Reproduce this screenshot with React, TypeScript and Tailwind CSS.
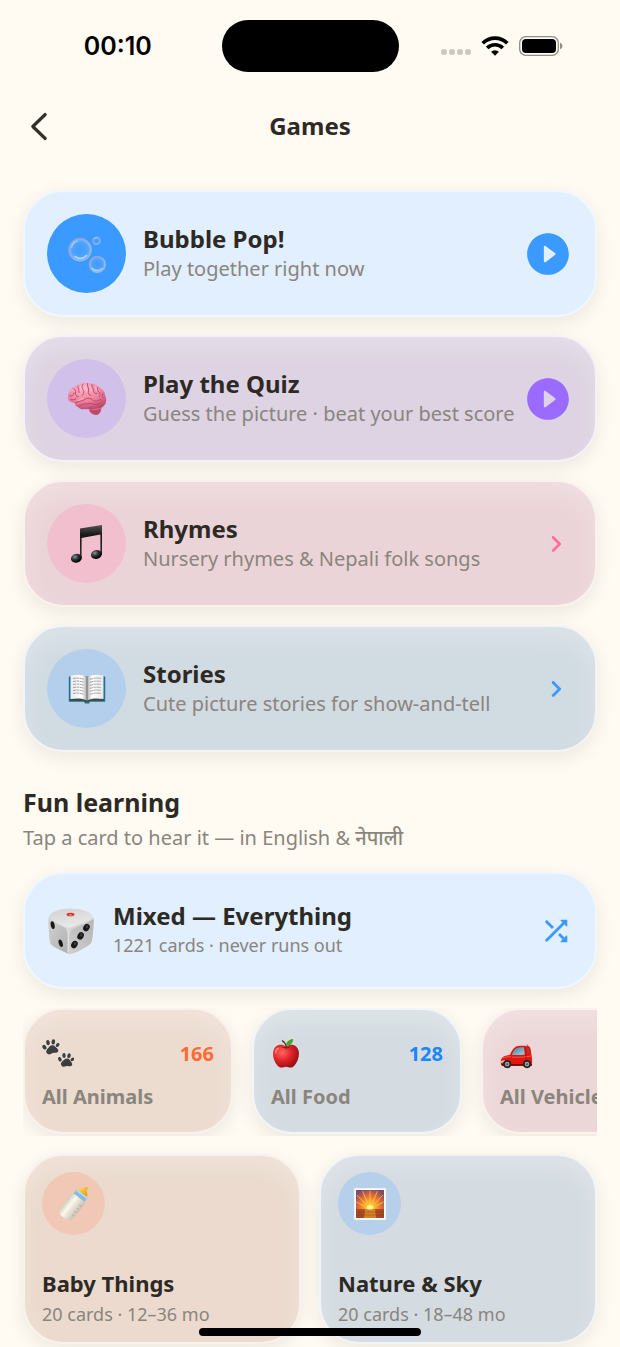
import type { ReactNode } from "react";

const ICONS = {
  play: "M12 2C6.48 2 2 6.48 2 12s4.48 10 10 10 10-4.48 10-10S17.52 2 12 2zm-2 13.5v-7c0-.41.47-.65.8-.4l4.67 3.5c.27.2.27.6 0 .8l-4.67 3.5c-.33.25-.8.01-.8-.4z",
  chevron:
    "M9.29 6.71c-.39.39-.39 1.02 0 1.41L13.17 12l-3.88 3.88c-.39.39-.39 1.02 0 1.41.39.39 1.02.39 1.41 0l4.59-4.59c.39-.39.39-1.02 0-1.41L10.7 6.7c-.38-.38-1.02-.38-1.41.01z",
  shuffle:
    "M10.59 9.17L6.12 4.7c-.39-.39-1.02-.39-1.41 0-.39.39-.39 1.02 0 1.41l4.46 4.46 1.42-1.4zm4.76-4.32l1.19 1.19L4.7 17.88c-.39.39-.39 1.02 0 1.41.39.39 1.02.39 1.41 0L17.96 7.46l1.19 1.19c.31.31.85.09.85-.36V4.5c0-.28-.22-.5-.5-.5h-3.79c-.45 0-.67.54-.36.85zm-.52 8.56l-1.41 1.41 3.13 3.13-1.2 1.2c-.31.31-.09.85.36.85h3.79c.28 0 .5-.22.5-.5v-3.79c0-.45-.54-.67-.85-.35l-1.19 1.19-3.13-3.14z",
};

function Glyph({ name, className }: { name: keyof typeof ICONS; className: string }) {
  return (
    <svg viewBox="0 0 24 24" fill="currentColor" aria-hidden="true" className={`shrink-0 ${className}`}>
      <path d={ICONS[name]} />
    </svg>
  );
}

function Bubbles() {
  return (
    <svg viewBox="0 0 40 40" className="size-10" aria-hidden="true">
      <defs>
        <radialGradient id="bub">
          <stop offset="0" stopColor="#5aa9fb" stopOpacity="0.15" />
          <stop offset="0.7" stopColor="#86bdf6" stopOpacity="0.3" />
          <stop offset="1" stopColor="#b9cdf2" stopOpacity="0.7" />
        </radialGradient>
        <linearGradient id="bubEdge" x1="0" y1="0" x2="1" y2="1">
          <stop offset="0" stopColor="#8fa3c4" />
          <stop offset="0.4" stopColor="#a79be0" />
          <stop offset="0.7" stopColor="#8fc3ee" />
          <stop offset="1" stopColor="#a9a3c4" />
        </linearGradient>
      </defs>
      <g fill="url(#bub)" stroke="url(#bubEdge)">
        <circle cx="13" cy="15.8" r="11.2" strokeWidth="1.1" />
        <circle cx="29.4" cy="6.7" r="3.8" strokeWidth="0.9" />
        <circle cx="30.3" cy="30.3" r="8" strokeWidth="1.3" />
      </g>
      <g fill="none" stroke="#fff" strokeLinecap="round">
        <path d="M4.6 13c1-3 3-5 5.6-5.8" strokeWidth="1.4" opacity="0.4" />
        <path d="M8 22.6c3.5 2.4 8 2.2 11.5-1" strokeWidth="1.8" opacity="0.5" />
        <path d="M25 34.2c2.6 3 7.6 3 10.2.2" strokeWidth="1.3" opacity="0.5" />
        <path d="M27.4 4.8c.8-.9 2-1.2 3-.9" strokeWidth="0.8" opacity="0.6" />
      </g>
    </svg>
  );
}

function Brain() {
  return (
    <svg viewBox="0 0 40 34" className="h-[34px] w-10" aria-hidden="true">
      <defs>
        <radialGradient id="brain" cx="0.4" cy="0.2" r="0.85">
          <stop offset="0" stopColor="#ffb3c6" />
          <stop offset="0.6" stopColor="#ee7f9c" />
          <stop offset="1" stopColor="#b8456a" />
        </radialGradient>
      </defs>
      <path d="M24 24c0 5 1 8 4 9 3 .6 5-1.5 6-4.5l-2-5z" fill="#b44763" />
      <path d="M21.5 25.5c0 4 3 7 6.5 7s6.5-3 6.5-7-3-5-6.5-5-6.5 1-6.5 5z" fill="#d05f80" />
      <path
        d="M1 16C.6 10.5 4 6 9 4c3-2.500 8-3.400 12-2.600 4-.6 9 1 11.500 4.200 3.500 1.700 5.500 4.900 5.900 8.400 1.400 3 1.100 7.500-1.400 9.500-1.500 2.300-5 3.200-8 2.300-3 1.900-6.500 1.800-9 .8-3 1.300-7 1-9-1.600-2.500-.2-3-2.300-2.800-4C4 20.800 1.300 19 1 16z"
        fill="url(#brain)"
      />
      <g fill="none" stroke="#b8446a" strokeWidth="0.9" strokeLinecap="round">
        <path d="M8.200 21c3-2.500 7-1.500 9.500-3.500s6-1.500 8 .5 5 1 8-.5" />
        <path d="M3 14c2 .5 3.500-.5 4-3M6 6.500c2.500.5 3 2.500 2.500 4.500s1 4 3 3.500M11 4c-.5 2.500 1.500 4 1 6.500M16 2c-2 2.500-.5 5 .5 6.500s0 4-1.500 5M20.500 1.500c-1 3 2 4.500 1 7.500s1 4 2.500 4.500M25 2.500c-1 2.500 1.500 3.500 1.500 6s2 3.500 3.500 3M31 5.500c-1.500 1.500-.5 3.500 1 4.500s1.500 3 .5 4.500M36.500 11c-1.500 1-1.500 3-.5 4.500M12 24c2-.5 4-2.500 6.500-2s4-1.500 6-.5 4 2 6 .5M4 17.500c1.500.5 3.500.5 5-.8M35 19c-1 2-3 3-5 3.500M19 27c1.500-1 4-.5 5.500-2" />
        <path d="M23.500 29c3 .8 7 .5 9.500-.8M25 31c2.500.4 5 .2 7-.6" stroke="#9e3552" />
      </g>
      <g fill="none" stroke="#ffd3dd" strokeWidth="0.9" strokeLinecap="round" opacity="0.8">
        <path d="M4.500 9c.8-1.500 1.500-1.800 2.300-2M13.500 4.500c0 1.500.7 2.500.8 4M18.500 4c-.3 2 1.300 3 1 5M23 4.500c.5 1.500 1.300 2.300 1.200 4M28.500 5c.2 1.500.9 2 1 3.500M11 18.500c2-.8 3.500-.8 5-1.800" />
      </g>
    </svg>
  );
}

function MusicNotes() {
  return (
    <svg viewBox="0 0 34 40" className="h-10 w-[34px]" aria-hidden="true">
      <defs>
        <linearGradient id="beam" x1="0" y1="0" x2="0" y2="1">
          <stop offset="0" stopColor="#555" />
          <stop offset="0.3" stopColor="#181818" />
          <stop offset="1" stopColor="#303030" />
        </linearGradient>
        <radialGradient id="note" cx="0.4" cy="0.3" r="0.6">
          <stop offset="0" stopColor="#8d989b" />
          <stop offset="0.5" stopColor="#30363a" />
          <stop offset="1" stopColor="#08090b" />
        </radialGradient>
      </defs>
      <path d="M10 4.500L32 1v30h-1.600V10.500L11.600 14v20H10z" fill="url(#beam)" />
      <ellipse cx="6.400" cy="34.300" rx="5.500" ry="4.400" transform="rotate(-15 6.400 34.300)" fill="url(#note)" />
      <ellipse cx="26.400" cy="30.500" rx="5.500" ry="4.400" transform="rotate(-15 26.400 30.500)" fill="url(#note)" />
    </svg>
  );
}

function Book() {
  return (
    <svg viewBox="0 0 38 30" className="h-[30px] w-[38px]" aria-hidden="true">
      <defs>
        <linearGradient id="pageL" x1="0" x2="1">
          <stop offset="0" stopColor="#e9e9e9" />
          <stop offset="0.7" stopColor="#fff" />
          <stop offset="1" stopColor="#a9a9a9" />
        </linearGradient>
        <linearGradient id="pageR" x1="0" x2="1">
          <stop offset="0" stopColor="#aaa" />
          <stop offset="0.3" stopColor="#fff" />
          <stop offset="1" stopColor="#e6e6e6" />
        </linearGradient>
      </defs>
      <path d="M.8 2.500h36.400v25.300H22l-1 1.600h-4l-1-1.600H.8z" fill="#1e7193" />
      <path d="M2 24.500h34v2.300H22l-1.300 1h-3.400l-1.300-1H2z" fill="#4a443c" />
      <path d="M2.500 1.500C8 .2 15 .4 19 3v23.500C15 24 8 24 2.500 25z" fill="url(#pageL)" />
      <path d="M35.500 1.500C30 .2 23 .4 19 3v23.500c4-2.500 11-2.500 16.500-1.500z" fill="url(#pageR)" />
      <path
        d="M5 4.500c4-.8 8-.5 11 .9M5 7.500c4-.8 8-.5 11 .9M5 10.500c4-.8 8-.5 11 .9M5 13.500c4-.8 8-.5 11 .9M5 16.500c4-.8 8-.5 11 .9M5 19.500c4-.8 8-.5 11 .9M22 5.400c3-1.400 7-1.700 11-.9M22 8.400c3-1.400 7-1.700 11-.9M22 11.400c3-1.400 7-1.700 11-.9M22 14.400c3-1.400 7-1.700 11-.9M22 17.400c3-1.400 7-1.700 11-.9M22 20.400c3-1.400 7-1.700 11-.9"
        fill="none"
        stroke="#9b9b9b"
        strokeWidth="0.9"
        strokeDasharray="3.500 0.500 2 0.500"
      />
      <path d="M19 3v23.500" stroke="#6c6c6c" strokeWidth="0.9" />
    </svg>
  );
}

function Dice() {
  return (
    <svg viewBox="0 0 49 49" className="size-12 shrink-0" aria-hidden="true">
      <defs>
        <linearGradient id="dTop" x1="0" y1="0" x2="0.3" y2="1">
          <stop offset="0" stopColor="#d2d2d2" />
          <stop offset="1" stopColor="#e9e9e9" />
        </linearGradient>
        <linearGradient id="dLeft" x1="0" y1="0" x2="1" y2="1">
          <stop offset="0" stopColor="#d2d2d2" />
          <stop offset="1" stopColor="#b0b0b0" />
        </linearGradient>
        <linearGradient id="dRight" x1="1" y1="0" x2="0" y2="1">
          <stop offset="0" stopColor="#b4b4b4" />
          <stop offset="1" stopColor="#cfcfcf" />
        </linearGradient>
      </defs>
      <path d="M1.500 12C2 8 5 5.500 9 4.300 18 1 30 1 39 4.300c5 1.500 8.300 4.200 8.700 8-.2 9-.8 17-2.200 23.500-.8 3-14 10-19 11.700-2 .6-4 .5-6-.4C14 44.500 6 40.500 3.800 37.800 2.500 35 1.300 18 1.500 12z" fill="#d6d6d6" />
      <path d="M1.600 12c2 2.500 14 7.500 17 9.500 2 1.500 2.500 4 2.500 7l-.2 18.700C14 44.500 6 40.500 3.800 37.800 2.500 35 1.300 18 1.600 12z" fill="url(#dLeft)" />
      <path d="M47.600 12c-3 3.500-18 8.500-21.500 10.500-2 1.500-3 3.500-3.200 6.500l-1.500 18.500c2 .5 4 .3 5.600-.2C32 45.500 44.700 38.800 45.500 35.800c1.400-6.500 2-14.800 2.100-23.800z" fill="url(#dRight)" />
      <path d="M2.500 9.500C4 6.500 6.500 5 9 4.300 18 1 30 1 39 4.300c4 1.200 6.700 3 8 5.700-2 4-18 8.500-21.500 10.500-2 1-4.500 1-6.500 0C15 18.500 4 14.500 2.500 9.500z" fill="url(#dTop)" />
      <path d="M20.500 22c1.500 2 1.500 6 1.400 10l-.3 14" fill="none" stroke="#eaeaea" strokeWidth="1.2" opacity="0.7" />
      <ellipse cx="24" cy="7.600" rx="4" ry="1.800" fill="#d8281e" />
      <ellipse cx="24" cy="8.200" rx="2.300" ry="0.7" fill="#f58d80" />
      <g fill="#191919">
        <ellipse cx="5.800" cy="18.500" rx="2" ry="4" transform="rotate(-12 5.800 18.500)" />
        <ellipse cx="14" cy="37" rx="2" ry="4" transform="rotate(-16 14 37)" />
        <ellipse cx="40.300" cy="21" rx="3.100" ry="4" transform="rotate(30 40.300 21)" />
        <ellipse cx="34.300" cy="29.500" rx="3.100" ry="4" transform="rotate(30 34.300 29.500)" />
        <ellipse cx="28" cy="38.300" rx="3.100" ry="4" transform="rotate(30 28 38.300)" />
      </g>
      <g fill="#3d3d3d">
        <ellipse cx="41" cy="20" rx="1.200" ry="1.600" />
        <ellipse cx="35" cy="28.500" rx="1.200" ry="1.600" />
        <ellipse cx="28.700" cy="37.300" rx="1.200" ry="1.600" />
      </g>
    </svg>
  );
}

function Paws() {
  const paw = (
    <>
      <path d="M5 10.500c1.500-1.500 2.500-4 5-4.300 2.600-.2 3.500 2 5.200 3.300 1.600 1.300 1.500 3.600-.4 4.100-1.600.4-2.700-.1-4.200.5-1.400.6-2.400 1.600-4.100 1.200-2-.5-3-3-1.500-4.800z" />
      <ellipse cx="2.400" cy="8.200" rx="1.800" ry="2.500" transform="rotate(-35 2.400 8.200)" />
      <ellipse cx="6" cy="3.600" rx="1.800" ry="2.700" transform="rotate(-12 6 3.600)" />
      <ellipse cx="11.300" cy="2.900" rx="1.800" ry="2.600" transform="rotate(8 11.300 2.900)" />
      <ellipse cx="15.600" cy="6" rx="1.600" ry="2.200" transform="rotate(40 15.600 6)" />
    </>
  );
  return (
    <svg viewBox="0 0 32 30" className="h-[30px] w-8" fill="#3c3d3f" aria-hidden="true">
      {paw}
      <g transform="translate(15.500 13.500) rotate(10 8 8) scale(0.940)">{paw}</g>
    </svg>
  );
}

function Apple() {
  return (
    <svg viewBox="0 0 30 30" className="size-[30px]" aria-hidden="true">
      <defs>
        <radialGradient id="apple" cx="0.35" cy="0.35" r="0.75">
          <stop offset="0" stopColor="#ff6a5c" />
          <stop offset="0.45" stopColor="#e3262a" />
          <stop offset="1" stopColor="#8f0a12" />
        </radialGradient>
      </defs>
      <path d="M15 7.500c3-2.200 7.500-2.400 10.300.2 3.200 3 3.200 8.300 1.500 13-1.600 4.300-4.300 7.800-7.300 7.800-1.800 0-2.700-.8-4.500-.8s-2.700.8-4.500.8c-3 0-5.900-3.500-7.400-7.800C1.600 16 1.500 10.700 4.700 7.700 7.500 5.100 12 5.300 15 7.500z" fill="url(#apple)" />
      <path d="M10.500 7.600c2.500 1.300 6.500 1.300 9 0-2 2.600-7 2.600-9 0z" fill="#7c0a10" />
      <path d="M15.400 8.500C15 5.500 13.600 3.200 11.400 1.800" fill="none" stroke="#4d2a17" strokeWidth="1.3" strokeLinecap="round" />
      <path d="M15 6.500c.3-3.700 3-6 7-6.400.4 3.900-2.500 7-7 6.400z" fill="#43a52c" />
      <path d="M4.500 14c0-2.500 1-4 3-4.800" fill="none" stroke="#ffb3a8" strokeWidth="1.5" strokeLinecap="round" opacity="0.6" />
    </svg>
  );
}

function Car() {
  return (
    <svg viewBox="0 0 34 30" className="h-[30px] w-[34px]" aria-hidden="true">
      <defs>
        <linearGradient id="glass" x1="0" y1="0" x2="1" y2="1">
          <stop offset="0" stopColor="#3d7f97" />
          <stop offset="1" stopColor="#9fd6e6" />
        </linearGradient>
      </defs>
      <g transform="translate(0 4.500)">
        <path d="M27 1l1.500 2.500" stroke="#333" strokeWidth="0.7" />
        <path d="M10 11.500C12 6.500 14.500 3.200 18 2.600c3.500-.6 8.500-.5 11 .5 1.500.6 2 3.500 2.300 7.500.8 3 1 7.500.6 10.400-.2 1-1 1.500-2 1.500H3.500C1.500 22.500.8 21 .8 18.500.8 14 3.500 12 10 11.500z" fill="#e2150f" />
        <path d="M11.800 11.200c1.400-4 3.600-6.800 6.800-7.200 1.800-.2 4-.2 5.400-.1l.8 7c-4 .7-9 1-13 .3z" fill="url(#glass)" />
        <path d="M26.200 4.200c1.200 0 2.200.1 2.600.4.500.9 1 3.300 1.100 5.400l-3 .3z" fill="#b4372a" />
        <path d="M2 14.500c3-1 6-1.200 9-1.200M12 13.500c4 .5 13 .3 19-1" fill="none" stroke="#ff7264" strokeWidth="0.7" />
        <path d="M25.300 4l1.400 17" stroke="#9c0c08" strokeWidth="0.6" />
        <path d="M1 17.500l4-1v2.300l-4 .5z" fill="#f1c9a8" />
        <path d="M1 20.500h31v1.800H2z" fill="#6a0f0b" />
        <circle cx="7.200" cy="20.600" r="4.100" fill="#262626" />
        <circle cx="7.200" cy="20.600" r="2.300" fill="#9fa2a6" />
        <circle cx="7.200" cy="20.600" r="0.9" fill="#3b3b3b" />
        <circle cx="27" cy="20.600" r="4.100" fill="#262626" />
        <circle cx="27" cy="20.600" r="2.300" fill="#9fa2a6" />
        <circle cx="27" cy="20.600" r="0.9" fill="#3b3b3b" />
      </g>
    </svg>
  );
}

function Bottle() {
  return (
    <svg viewBox="0 0 34 34" className="size-[34px]" aria-hidden="true">
      <defs>
        <linearGradient id="milk" x1="0" x2="1">
          <stop offset="0" stopColor="#cfc9bb" />
          <stop offset="0.35" stopColor="#fbf8ec" />
          <stop offset="1" stopColor="#c4bfae" />
        </linearGradient>
        <linearGradient id="teat" x1="0" x2="1">
          <stop offset="0" stopColor="#ffd94a" />
          <stop offset="1" stopColor="#e89a08" />
        </linearGradient>
      </defs>
      <g transform="rotate(38 17 17)">
        <path d="M15.500-3.500c.3-1.500 2.700-1.500 3 0l.3 2.700c2 1 4 2.300 4 4.800H11.200c0-2.800 2-3.800 4-4.800z" fill="url(#teat)" />
        <path d="M10.600 3.500h12.800l.8 5.500H9.800z" fill="#85bde0" />
        <path d="M10.600 3.500h12.800l.2 1.700H10.400z" fill="#b7dcf0" />
        <path d="M9.900 9h14.200c1.500 2.500 1.600 4.500 1.300 8l-.6 13c-.1 2.500-2 4-7.800 4s-7.700-1.500-7.800-4L8.600 17c-.3-3.500-.2-5.500 1.300-8z" fill="url(#milk)" />
        <path d="M21.500 14.500h2.800M22 18.500h2.200M21.500 22.500h2.600M22 26.500h2" stroke="#a8a293" strokeWidth="0.7" />
      </g>
    </svg>
  );
}

function Sunrise() {
  return (
    <svg viewBox="0 0 34 34" className="size-[34px]" aria-hidden="true">
      <defs>
        <radialGradient id="sun" cx="0.5" cy="0.6" r="0.65">
          <stop offset="0" stopColor="#fff27a" />
          <stop offset="0.22" stopColor="#ffb92e" />
          <stop offset="0.6" stopColor="#e8702f" />
          <stop offset="1" stopColor="#84486a" />
        </radialGradient>
      </defs>
      <rect x="1" y="1" width="32" height="32" fill="#fff" stroke="#cfcfd6" strokeWidth="0.5" />
      <rect x="3" y="3" width="28" height="28" fill="url(#sun)" />
      <g stroke="#ffd94d" strokeWidth="0.9" opacity="0.75">
        <path d="M17 16V4M14.500 16L9.500 4M19.500 16l5-12M13 17.500L4 8M21 17.500L30 8M12 19.500L3.500 15M22 19.500l8.500-4.500" />
      </g>
      <rect x="3" y="22" width="28" height="9" fill="#a0431f" opacity="0.85" />
      <path d="M12 22h10l1 9H11z" fill="#f0a52a" opacity="0.6" />
      <ellipse cx="17" cy="20.500" rx="3.500" ry="2" fill="#fff38c" />
      <path d="M3 25h28M3 28h28" stroke="#7d3524" strokeWidth="0.7" opacity="0.5" />
    </svg>
  );
}

const SHADE = "border-2 shadow-[0_6px_18px_rgba(70,65,40,0.09)]";
const VEIL = "border-2 shadow-[0_6px_18px_rgba(70,65,40,0.09),inset_0_12px_24px_rgba(255,255,255,0.25)]";

type Row = {
  title: string;
  text: string;
  card: string;
  disc: string;
  art: ReactNode;
  icon: "play" | "chevron";
  tone: string;
};

const rows: Row[] = [
  {
    title: "Bubble Pop!",
    text: "Play together right now",
    card: `${SHADE} border-[#f1f7fd] bg-[#e1efff]`,
    disc: "bg-[#3a9aff]",
    art: <Bubbles />,
    icon: "play",
    tone: "size-[50px] text-[#3a9aff]",
  },
  {
    title: "Play the Quiz",
    text: "Guess the picture · beat your best score",
    card: `${VEIL} border-[#f6f1f6] bg-[#ddd3e2]`,
    disc: "bg-[#d1c0ea]",
    art: <Brain />,
    icon: "play",
    tone: "size-[50px] text-[#9b6bff]",
  },
  {
    title: "Rhymes",
    text: "Nursery rhymes & Nepali folk songs",
    card: `${VEIL} border-[#fbf1ef] bg-[#ebd4d7]`,
    disc: "bg-[#f1bfce]",
    art: <MusicNotes />,
    icon: "chevron",
    tone: "size-[34px] text-[#ff6f9f]",
  },
  {
    title: "Stories",
    text: "Cute picture stories for show-and-tell",
    card: `${VEIL} border-[#f1f5f8] bg-[#d1dbe2]`,
    disc: "bg-[#b3cfec]",
    art: <Book />,
    icon: "chevron",
    tone: "size-[34px] text-[#3a9aff]",
  },
];

const chips = [
  { label: "All Animals", count: "166", art: <Paws />, card: "border-[#faf2ea] bg-[#ecdbcf]", tone: "text-[#ff6b35]" },
  { label: "All Food", count: "128", art: <Apple />, card: "border-[#f1f5f8] bg-[#d4dce1]", tone: "text-[#1a86ff]" },
  { label: "All Vehicles", count: "", art: <Car />, card: "border-[#fbf1ef] bg-[#ecd7d8]", tone: "text-[#ff4f8b]" },
];

const decks = [
  { title: "Baby Things", text: "20 cards · 12–36 mo", art: <Bottle />, card: "border-[#faf2ea] bg-[#ebdacd]", disc: "bg-[#f1c8b6]" },
  { title: "Nature & Sky", text: "20 cards · 18–48 mo", art: <Sunrise />, card: "border-[#f1f5f8] bg-[#d4dbe1]", disc: "bg-[#b6cfea]" },
];

function StatusBar() {
  return (
    <div className="grid h-[91px] grid-cols-[1fr_177px_1fr] items-center">
      <time className="pt-[3px] pr-[14px] pl-[28px] text-center font-['Inter',sans-serif] text-[25px] font-semibold text-black">
        00:10
      </time>
      <div className="h-[52px] rounded-full bg-black" />
      <div className="flex items-center justify-end gap-[10px] pr-[57px]">
        <div className="mt-3 flex gap-[2px]">
          {[0, 1, 2, 3].map((dot) => (
            <span key={dot} className="size-[6px] rounded-full bg-[#cbc7c1]" />
          ))}
        </div>
        <svg viewBox="0 0 28 20" className="h-5 w-7" fill="none" stroke="#000" aria-hidden="true">
          <path d="M1.700 7.300a17.400 17.400 0 0 1 24.600 0" strokeWidth="3.700" />
          <path d="M6.200 12a11 11 0 0 1 15.600 0" strokeWidth="3.600" />
          <path d="M14 19.700l-3.900-3.900a5.500 5.500 0 0 1 7.800 0z" fill="#000" stroke="none" />
        </svg>
        <svg viewBox="0 0 44 20" className="h-5 w-11" aria-hidden="true">
          <rect x="0.7" y="0.7" width="38.600" height="18.600" rx="6" fill="none" stroke="#8f8d89" strokeWidth="1.3" />
          <rect x="3" y="3" width="34" height="14" rx="4" fill="#000" />
          <path d="M41 6.800c3.200 1.200 3.200 5.200 0 6.400z" fill="#8f8d89" />
        </svg>
      </div>
    </div>
  );
}

export default function App() {
  return (
    <div className="flex min-h-screen flex-col bg-[#fffaf2] font-['Noto_Sans','Open_Sans',sans-serif] text-[#2d2a26]">
      <StatusBar />
      <header className="grid h-[70px] grid-cols-[1fr_auto_1fr] items-center px-[23px]">
        <button type="button" aria-label="Back" className="flex size-8 items-center justify-center">
          <svg viewBox="0 0 18 30" className="h-[30px] w-[18px]" fill="none" stroke="#34302a" strokeWidth="3.200" strokeLinecap="round" strokeLinejoin="round" aria-hidden="true">
            <path d="M15.200 3.500L2.800 15.500l12.400 12" />
          </svg>
        </button>
        <h1 className="text-[24px] leading-8 font-bold">Games</h1>
      </header>

      <main className="px-[23px] pt-[29px] pb-[3px]">
        <div className="flex flex-col gap-[18px]">
          {rows.map((row) => (
            <button key={row.title} type="button" className={`flex w-full items-center rounded-[40px] p-[22px] text-left ${row.card}`}>
              <span className={`flex size-[79px] shrink-0 items-center justify-center rounded-full ${row.disc}`}>{row.art}</span>
              <span className="ml-[17px] min-w-0 flex-1 pb-[2px] whitespace-nowrap">
                <span className="block text-[24px] leading-8 font-bold">{row.title}</span>
                <span className="block text-[20px] leading-7 text-[#8a857d]">{row.text}</span>
              </span>
              <Glyph name={row.icon} className={row.tone} />
            </button>
          ))}
        </div>

        <h2 className="mt-8 text-[25px] leading-9 font-bold">Fun learning</h2>
        <p className="mt-1 text-[20px] leading-7 text-[#8a857d]">
          Tap a card to hear it — in English &amp;{" "}
          <span lang="ne" className="font-medium">
            नेपाली
          </span>
        </p>

        <button type="button" className={`mt-5 flex h-[117px] w-full items-center rounded-[40px] px-[22px] text-left ${SHADE} border-[#f1f7fd] bg-[#e1efff]`}>
          <Dice />
          <span className="ml-[18px] flex-1 pb-1">
            <span className="block text-[24px] leading-8 font-bold">Mixed — Everything</span>
            <span className="block text-[18px] leading-[26px] text-[#8a857d]">1221 cards · never runs out</span>
          </span>
          <Glyph name="shuffle" className="size-[34px] text-[#3a9aff]" />
        </button>

        <div className="mt-[19px] flex gap-[19px] overflow-x-auto overflow-y-hidden pb-[2px] [scrollbar-width:none]">
          {chips.map((chip) => (
            <button key={chip.label} type="button" className={`w-[210px] shrink-0 rounded-[40px] px-[17px] pt-[24px] pb-[21px] text-left ${VEIL} ${chip.card}`}>
              <span className="flex h-10 items-center justify-between">
                {chip.art}
                {chip.count && <span className={`text-[20px] leading-7 font-bold ${chip.tone}`}>{chip.count}</span>}
              </span>
              <span className="mt-[9px] block text-[20px] leading-7 font-bold text-[#8a857d]">{chip.label}</span>
            </button>
          ))}
        </div>

        <div className="mt-[18px] grid grid-cols-2 gap-[18px]">
          {decks.map((deck) => (
            <button key={deck.title} type="button" className={`rounded-[40px] px-[17px] py-4 text-left ${VEIL} ${deck.card}`}>
              <span className={`flex size-[63px] items-center justify-center rounded-full ${deck.disc}`}>{deck.art}</span>
              <span className="mt-8 block text-[22px] leading-8 font-bold">{deck.title}</span>
              <span className="mt-[3px] block text-[18px] leading-6 text-[#8a857d]">{deck.text}</span>
            </button>
          ))}
        </div>
      </main>

      <div className="fixed bottom-[11px] left-1/2 h-2 w-[222px] -translate-x-1/2 rounded-full bg-black" />
    </div>
  );
}
